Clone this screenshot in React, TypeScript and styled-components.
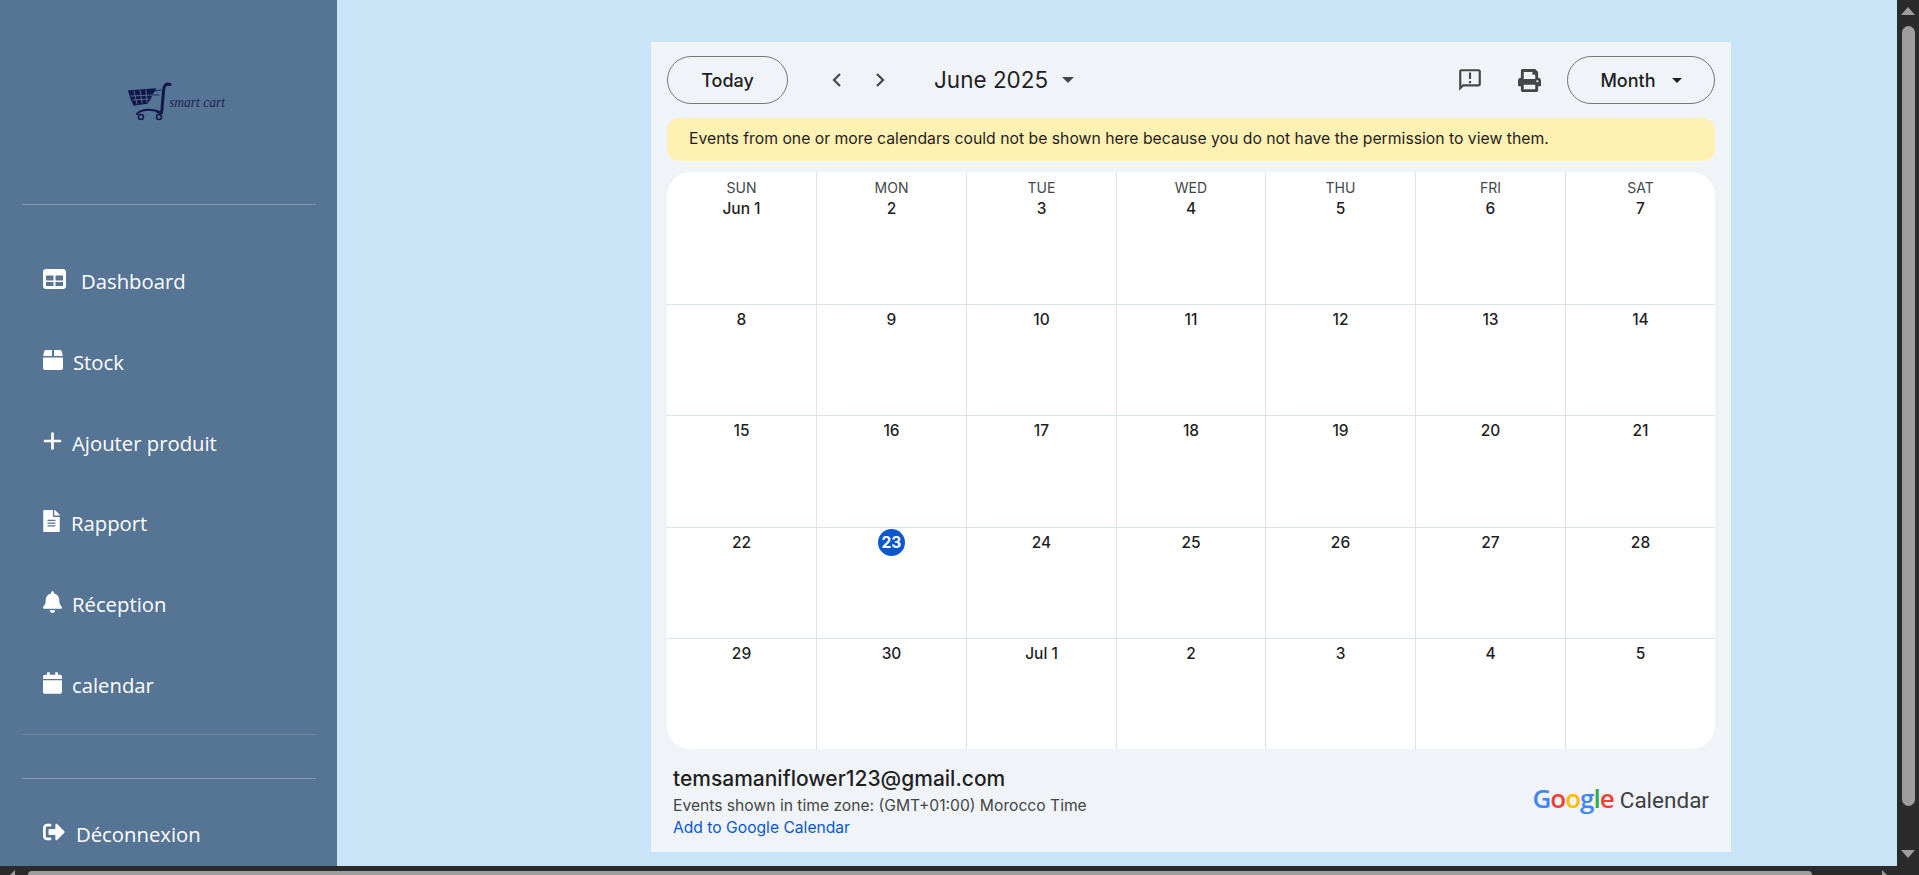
import React from "react";
import styled, { createGlobalStyle } from "styled-components";
import { FaBell, FaCalendar, FaFileAlt, FaPrint, FaSignOutAlt } from "react-icons/fa";
import { FaPlus } from "react-icons/fa6";

const GlobalStyle = createGlobalStyle`
  html, body {
    margin: 0;
    padding: 0;
    height: 100%;
    overflow: hidden;
  }
  * {
    box-sizing: border-box;
  }
`;

const weeks = [
  ["Jun 1", "2", "3", "4", "5", "6", "7"],
  ["8", "9", "10", "11", "12", "13", "14"],
  ["15", "16", "17", "18", "19", "20", "21"],
  ["22", "23", "24", "25", "26", "27", "28"],
  ["29", "30", "Jul 1", "2", "3", "4", "5"],
];
const rowHeights = [132, 111, 112, 111, 111];
const dayNames = ["SUN", "MON", "TUE", "WED", "THU", "FRI", "SAT"];

const App: React.FC = () => {
  return (
    <Screen>
      <GlobalStyle />
      <Main>
        <Sidebar>
          <LogoArea>
            <CartLogo />
          </LogoArea>
          <Rule />
          <Nav>
            <NavItem $gap={15} $icon={23}><TableIcon />Dashboard</NavItem>
            <NavItem $gap={10} $icon={20}><BoxIcon />Stock</NavItem>
            <NavItem $gap={10} $icon={19}><FaPlus size={22} />Ajouter produit</NavItem>
            <NavItem $gap={11} $icon={17}><FaFileAlt size={22} />Rapport</NavItem>
            <NavItem $gap={10} $icon={19}><FaBell size={22} />Réception</NavItem>
            <NavItem $gap={10} $icon={19}><FaCalendar size={22} />calendar</NavItem>
          </Nav>
          <FaintRule />
          <SecondRule />
          <NavItem $gap={11} $icon={22}><FaSignOutAlt size={22} />Déconnexion</NavItem>
        </Sidebar>
        <Content>
          <Calendar>
            <Toolbar>
              <PillButton $width={121}>Today</PillButton>
              <Arrows>
                <Chevron d="M15 6l-6 6 6 6" />
                <Chevron d="M9 6l6 6-6 6" />
              </Arrows>
              <MonthLabel>June 2025</MonthLabel>
              <Caret />
              <ToolbarRight>
                <ToolIcon viewBox="0 0 24 24">
                  <path d="M20 2H4c-1.100 0-2 .9-2 2v18l4-4h14c1.100 0 2-.9 2-2V4c0-1.100-.9-2-2-2zm0 14H5.200L4 17.200V4h16v12zM11 5h2v6h-2zm0 8h2v2h-2z" />
                </ToolIcon>
                <PrintIcon><FaPrint size={23} /></PrintIcon>
                <PillButton $width={148}>Month<Caret /></PillButton>
              </ToolbarRight>
            </Toolbar>
            <Banner>Events from one or more calendars could not be shown here because you do not have the permission to view them.</Banner>
            <Grid>
              {weeks.map((week, w) => (
                <Week key={w} $height={rowHeights[w]}>
                  {week.map((day, d) => (
                    <Cell key={d} $first={w === 0}>
                      {w === 0 && <DayName>{dayNames[d]}</DayName>}
                      {day === "23" ? <Today>{day}</Today> : <DayNum $first={w === 0}>{day}</DayNum>}
                    </Cell>
                  ))}
                </Week>
              ))}
            </Grid>
            <Footer>
              <div>
                <Email>temsamaniflower123@gmail.com</Email>
                <Zone>Events shown in time zone: (GMT+01:00) Morocco Time</Zone>
                <AddLink>Add to Google Calendar</AddLink>
              </div>
              <Brand>
                <GoogleWord>
                  <span style={{ color: "#4285f4" }}>G</span>
                  <span style={{ color: "#ea4335" }}>o</span>
                  <span style={{ color: "#fbbc05" }}>o</span>
                  <span style={{ color: "#4285f4" }}>g</span>
                  <span style={{ color: "#34a853" }}>l</span>
                  <span style={{ color: "#ea4335" }}>e</span>
                </GoogleWord>
                <BrandCalendar>Calendar</BrandCalendar>
              </Brand>
            </Footer>
          </Calendar>
        </Content>
        <VScroll>
          <UpArrow />
          <VThumb />
          <DownArrow />
        </VScroll>
      </Main>
      <HScroll>
        <LeftArrow />
        <HThumb />
        <RightArrow />
      </HScroll>
    </Screen>
  );
};

const Chevron: React.FC<{ d: string }> = ({ d }) => (
  <ChevronSvg viewBox="0 0 24 24">
    <path d={d} fill="none" stroke="#444746" strokeWidth="2.200" />
  </ChevronSvg>
);

const TableIcon: React.FC = () => (
  <svg width="23" height="20" viewBox="0 0 23 20" fill="currentColor">
    <path
      fillRule="evenodd"
      d="M3 0h17c1.700 0 3 1.300 3 3v14c0 1.700-1.300 3-3 3H3c-1.700 0-3-1.300-3-3V3c0-1.700 1.300-3 3-3zM3 6.500v5h7.500v-5zM12.500 6.500v5H20v-5zM3 13v4h7.500v-4zM12.500 13v4H20v-4z"
    />
  </svg>
);

const BoxIcon: React.FC = () => (
  <svg width="20" height="20" viewBox="0 0 20 20" fill="currentColor">
    <path d="M3 0h6v6H0.200L1 2C1.300 .8 2 0 3 0zM11 0h6c1 0 1.700 .8 2 2l.8 4H11zM0 7.500h20V18c0 1.100-.9 2-2 2H2c-1.100 0-2-.9-2-2z" />
  </svg>
);

const CartLogo: React.FC = () => (
  <svg width="100" height="42" viewBox="0 0 100 42">
    <g fill="none" stroke="#12184a" strokeLinecap="round">
      <path d="M3 9 L29 7 L26 12 L24 17 L21 21 L8 23 L5 16 Z" fill="#12184a" strokeWidth="1.500" />
      <path d="M8 9 L11 22 M14 8 L16 21 M20 8 L21 20 M5 14 L26 13 M7 18 L23 17" stroke="#567494" strokeWidth="0.900" />
      <path d="M28 9 L35 8 M27 13 L33 13" strokeWidth="0.800" />
      <path d="M44 2.500 C39 1 38 4 37.500 9 L36 27 C36 31 34 31 32 30" strokeWidth="3" />
      <path d="M11 32 C16 26 28 27 36 31" strokeWidth="2.200" />
      <circle cx="15" cy="35" r="2.500" strokeWidth="1.500" />
      <circle cx="33" cy="35" r="2.500" strokeWidth="1.500" />
    </g>
    <text x="43" y="25" fontFamily="'Liberation Serif', serif" fontStyle="italic" fontSize="14" fill="#1d2454" textLength="56" lengthAdjust="spacingAndGlyphs">smart cart</text>
  </svg>
);

const Screen = styled.div`
  width: 1919px;
  height: 875px;
  display: flex;
  flex-direction: column;
  background: #2b2b2b;
  overflow: hidden;
`;

const Main = styled.div`
  display: flex;
  height: 866px;
`;

const Sidebar = styled.aside`
  width: 337px;
  flex: none;
  height: 866px;
  background: #567494;
  padding: 0 21px 0 22px;
  font-family: "Open Sans", "Noto Sans", sans-serif;
`;

const LogoArea = styled.div`
  height: 204px;
  padding: 82px 0 0 104px;
`;

const Rule = styled.div`
  height: 1px;
  background: #8499b1;
`;

const FaintRule = styled(Rule)`
  background: #6c859f;
  margin-top: 9px;
`;

const SecondRule = styled(Rule)`
  margin-top: 43px;
  margin-bottom: 15px;
`;

const Nav = styled.nav`
  display: flex;
  flex-direction: column;
  padding-top: 36px;
`;

const NavItem = styled.a<{ $gap: number; $icon: number }>`
  height: 80.7px;
  display: flex;
  align-items: center;
  gap: ${({ $gap }) => $gap}px;
  padding: 0 0 0 21px;
  color: #fff;
  font-size: 20.3px;
  line-height: 30px;
  svg {
    flex: none;
    width: ${({ $icon }) => $icon}px;
    margin-top: -4px;
  }
`;

const Content = styled.main`
  flex: 1;
  background: #c9e4f7;
  padding: 42px 0 0 314px;
`;

const Calendar = styled.section`
  width: 1080px;
  height: 810px;
  background: #f0f4f9;
  padding: 14px 16px 0;
  font-family: Roboto, "Noto Sans", sans-serif;
  color: #1f1f1f;
`;

const Toolbar = styled.div`
  height: 48px;
  display: flex;
  align-items: center;
`;

const PillButton = styled.button<{ $width: number }>`
  width: ${({ $width }) => $width}px;
  height: 48px;
  display: flex;
  align-items: center;
  justify-content: center;
  gap: 16px;
  padding: 0;
  border: 1px solid #747775;
  border-radius: 24px;
  background: transparent;
  color: #1f1f1f;
  font-family: Inter, Roboto, sans-serif;
  font-size: 18px;
  font-weight: 500;
`;

const Arrows = styled.div`
  display: flex;
  gap: 19px;
  margin-left: 37px;
`;

const ChevronSvg = styled.svg`
  width: 24px;
  height: 24px;
`;

const MonthLabel = styled.div`
  margin-left: 42px;
  font-family: Inter, Roboto, sans-serif;
  font-size: 22.5px;
  line-height: 28px;
`;

const Caret = styled.span`
  width: 0;
  height: 0;
  margin-left: 14px;
  border-left: 6px solid transparent;
  border-right: 6px solid transparent;
  border-top: 6px solid #444746;
  ${PillButton} & {
    margin-left: 0;
    border-top-color: #1f1f1f;
    border-left-width: 5px;
    border-right-width: 5px;
    border-top-width: 5px;
  }
`;

const ToolbarRight = styled.div`
  margin-left: auto;
  display: flex;
  align-items: center;
`;

const ToolIcon = styled.svg`
  width: 26px;
  height: 26px;
  fill: #444746;
`;

const PrintIcon = styled.div`
  display: flex;
  margin: 0 26px 0 35px;
  color: #444746;
`;

const Banner = styled.div`
  height: 43px;
  margin-top: 14px;
  padding: 0 22px 2px;
  display: flex;
  align-items: center;
  background: #fff0b3;
  border-radius: 12px;
  font-family: Inter, Roboto, sans-serif;
  font-size: 15.75px;
`;

const Grid = styled.div`
  height: 577px;
  margin-top: 11px;
  background: #fff;
  border-radius: 24px;
  overflow: hidden;
`;

const Week = styled.div<{ $height: number }>`
  height: ${({ $height }) => $height}px;
  display: grid;
  grid-template-columns: 150px 150px 150px 149px 150px 150px 149px;
`;

const Cell = styled.div<{ $first: boolean }>`
  display: flex;
  flex-direction: column;
  align-items: center;
  padding-top: ${({ $first }) => ($first ? 6 : 1)}px;
  border-right: 1px solid #dde3ea;
  border-top: ${({ $first }) => ($first ? "none" : "1px solid #dde3ea")};
  &:last-child {
    border-right: none;
  }
`;

const DayName = styled.div`
  font-family: Inter, Roboto, sans-serif;
  font-size: 14px;
  line-height: 20px;
  color: #444746;
`;

const DayNum = styled.div<{ $first?: boolean }>`
  height: ${({ $first }) => ($first ? 21 : 26)}px;
  display: flex;
  align-items: center;
  font-family: Inter, Roboto, sans-serif;
  font-size: 15.5px;
  font-weight: 500;
`;

const Today = styled(DayNum)`
  width: 27px;
  height: 27px;
  justify-content: center;
  border-radius: 50%;
  background: #0b57d0;
  color: #fff;
  font-weight: 700;
`;

const Footer = styled.footer`
  display: flex;
  justify-content: space-between;
  align-items: flex-end;
  padding: 17px 6px 0 6px;
`;

const Email = styled.div`
  font-family: Inter, Roboto, sans-serif;
  font-size: 21px;
  font-weight: 500;
  line-height: 26px;
`;

const Zone = styled.div`
  font-family: Inter, Roboto, sans-serif;
  font-size: 15.65px;
  line-height: 22px;
  color: #444746;
  margin-top: 3px;
`;

const AddLink = styled.a`
  display: block;
  font-family: Inter, Roboto, sans-serif;
  font-size: 15.65px;
  line-height: 22px;
  color: #0b57d0;
`;

const Brand = styled.div`
  display: flex;
  align-items: baseline;
  gap: 6px;
  margin-bottom: 23px;
`;

const GoogleWord = styled.div`
  font-family: "Open Sans", Roboto, sans-serif;
  font-size: 26px;
  font-weight: 600;
  letter-spacing: -1px;
`;

const BrandCalendar = styled.div`
  font-family: Roboto, sans-serif;
  font-size: 22.5px;
  color: #3c4043;
`;

const VScroll = styled.div`
  width: 22px;
  flex: none;
  display: flex;
  flex-direction: column;
  align-items: center;
  background: #2b2b2b;
`;

const VThumb = styled.div`
  width: 13px;
  height: 780px;
  margin-top: 11px;
  background: #9e9e9e;
  border-radius: 7px;
`;

const UpArrow = styled.div`
  width: 0;
  height: 0;
  margin-top: 7px;
  border-left: 7.5px solid transparent;
  border-right: 7.5px solid transparent;
  border-bottom: 8px solid #9e9e9e;
`;

const DownArrow = styled.div`
  width: 0;
  height: 0;
  margin-top: auto;
  margin-bottom: 8px;
  border-left: 7.5px solid transparent;
  border-right: 7.5px solid transparent;
  border-top: 8px solid #9e9e9e;
`;

const HScroll = styled.div`
  height: 9px;
  display: flex;
  align-items: flex-end;
  overflow: hidden;
  padding-left: 10px;
  background: #2b2b2b;
`;

const HThumb = styled.div`
  width: 1784px;
  height: 4px;
  margin-left: 13px;
  background: #9e9e9e;
  border-radius: 7px 7px 0 0;
`;

const LeftArrow = styled.div`
  width: 0;
  height: 0;
  border-top: 5px solid transparent;
  border-right: 5px solid #9e9e9e;
`;

const RightArrow = styled.div`
  width: 0;
  height: 0;
  margin-left: 70px;
  border-top: 5px solid transparent;
  border-left: 5px solid #9e9e9e;
`;

export default App;
